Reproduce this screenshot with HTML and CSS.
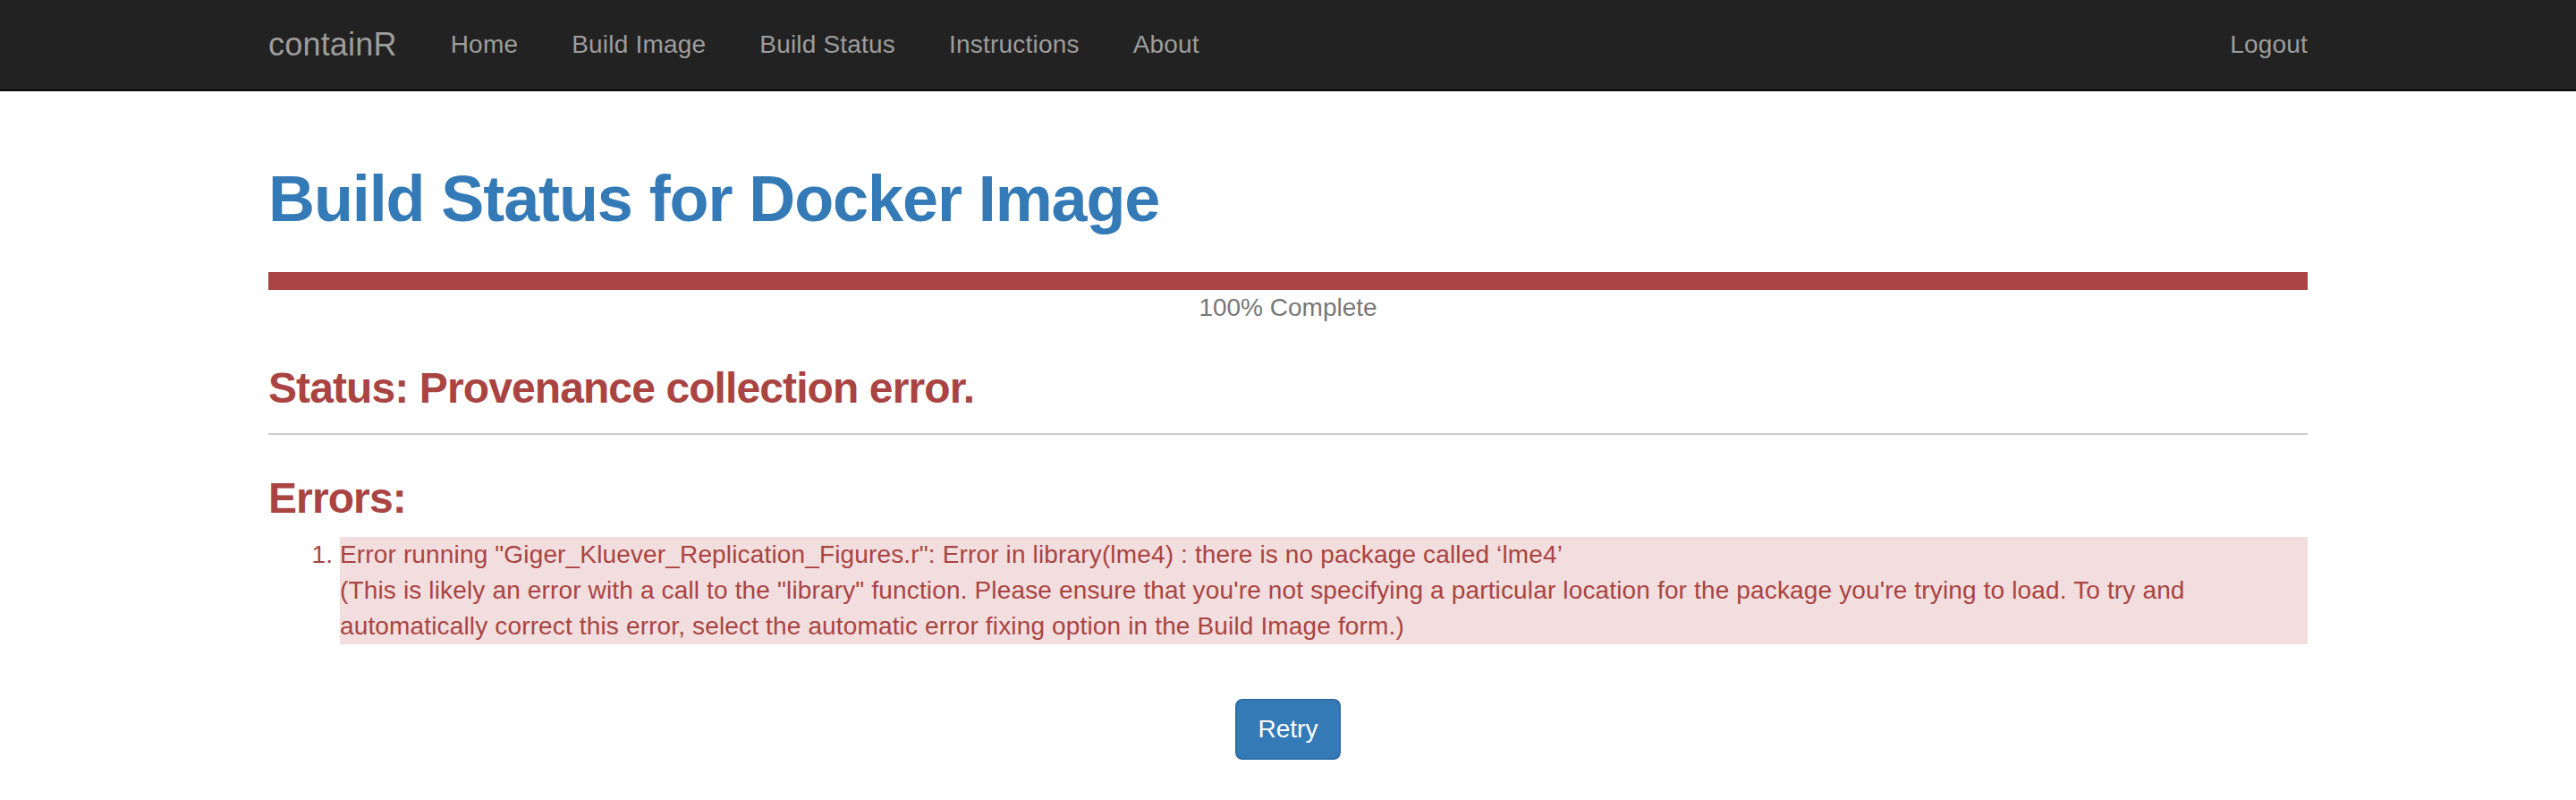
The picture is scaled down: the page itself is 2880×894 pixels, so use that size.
FILE: index.html
```html
<!DOCTYPE html>
<html lang="en">
<head>
<meta charset="utf-8">
<title>containR - Build Status</title>
<link rel="stylesheet" href="styles.css">
</head>
<body>
<nav class="navbar">
  <div class="container nav-inner">
    <div class="nav-left">
      <a class="brand" href="#">containR</a>
      <ul class="nav">
        <li><a href="#">Home</a></li>
        <li><a href="#">Build Image</a></li>
        <li><a href="#">Build Status</a></li>
        <li><a href="#">Instructions</a></li>
        <li><a href="#">About</a></li>
      </ul>
    </div>
    <ul class="nav nav-right">
      <li><a href="#">Logout</a></li>
    </ul>
  </div>
</nav>
<main class="container content">
  <h1 class="title">Build Status for Docker Image</h1>
  <div class="progress"><div class="progress-bar" style="width:100%"></div></div>
  <p class="progress-label">100% Complete</p>
  <h3 class="status">Status: Provenance collection error.</h3>
  <hr class="rule">
  <h3 class="errors-title">Errors:</h3>
  <ol class="errors">
    <li class="error-item">Error running "Giger_Kluever_Replication_Figures.r": Error in library(lme4) : there is no package called ‘lme4’<br>(This is likely an error with a call to the "library" function. Please ensure that you're not specifying a particular location for the package you're trying to load. To try and automatically correct this error, select the automatic error fixing option in the Build Image form.)</li>
  </ol>
  <div class="actions">
    <button class="btn-primary" type="button">Retry</button>
  </div>
</main>
</body>
</html>
```

FILE: styles.css
```css
* { box-sizing: border-box; }
html, body { margin: 0; padding: 0; }
body {
  font-family: "Liberation Sans", Arial, Helvetica, sans-serif;
  font-size: 28px;
  line-height: 40px;
  color: #333;
  background: #fff;
}
a { text-decoration: none; }

.container {
  width: 2340px;
  margin: 0 auto;
  padding: 0 30px;
}

/* navbar */
.navbar {
  background: #222;
  border-bottom: 2px solid #080808;
  height: 102px;
}
.nav-inner {
  display: flex;
  justify-content: space-between;
  align-items: stretch;
  height: 100px;
}
.nav-left { display: flex; margin-left: -30px; }
.brand {
  display: block;
  padding: 30px;
  font-size: 36px;
  line-height: 40px;
  letter-spacing: 0.2px;
  color: #9d9d9d;
}
.nav {
  display: flex;
  list-style: none;
  margin: 0;
  padding: 0;
}
.nav a {
  display: block;
  padding: 30px;
  line-height: 40px;
  font-size: 28px;
  letter-spacing: 0.2px;
  color: #9d9d9d;
}
.nav-right { margin-right: -30px; }

/* content */
.title {
  margin: 80px 0 42px;
  font-size: 72px;
  line-height: 80px;
  font-weight: 700;
  letter-spacing: -1.1px;
  color: #337ab7;
}
.progress {
  height: 20px;
  background: #f5f5f5;
}
.progress-bar {
  height: 20px;
  background: #a94442;
}
.progress-label {
  margin: 0;
  text-align: center;
  color: #777;
}
.status, .errors-title {
  font-size: 48px;
  line-height: 53px;
  font-weight: 700;
  letter-spacing: -0.9px;
  color: #a94442;
}
.status { margin: 43px 0 0; }
.rule {
  margin: 24px 0 0;
  border: 0;
  border-top: 2px solid #ccc;
  height: 0;
}
.errors-title { margin: 44px 0 17px; }
.errors {
  margin: 0;
  padding-left: 80px;
  color: #a94442;
}
.error-item {
  background: #f2dede;
  line-height: 40px;
  letter-spacing: 0.15px;
}
.actions {
  display: flex;
  justify-content: center;
  margin-top: 61px;
}
.btn-primary {
  font-family: inherit;
  font-size: 28px;
  line-height: 40px;
  padding: 12px 24px;
  color: #fff;
  background: #337ab7;
  border: 2px solid #2e6da4;
  border-radius: 8px;
}
```
